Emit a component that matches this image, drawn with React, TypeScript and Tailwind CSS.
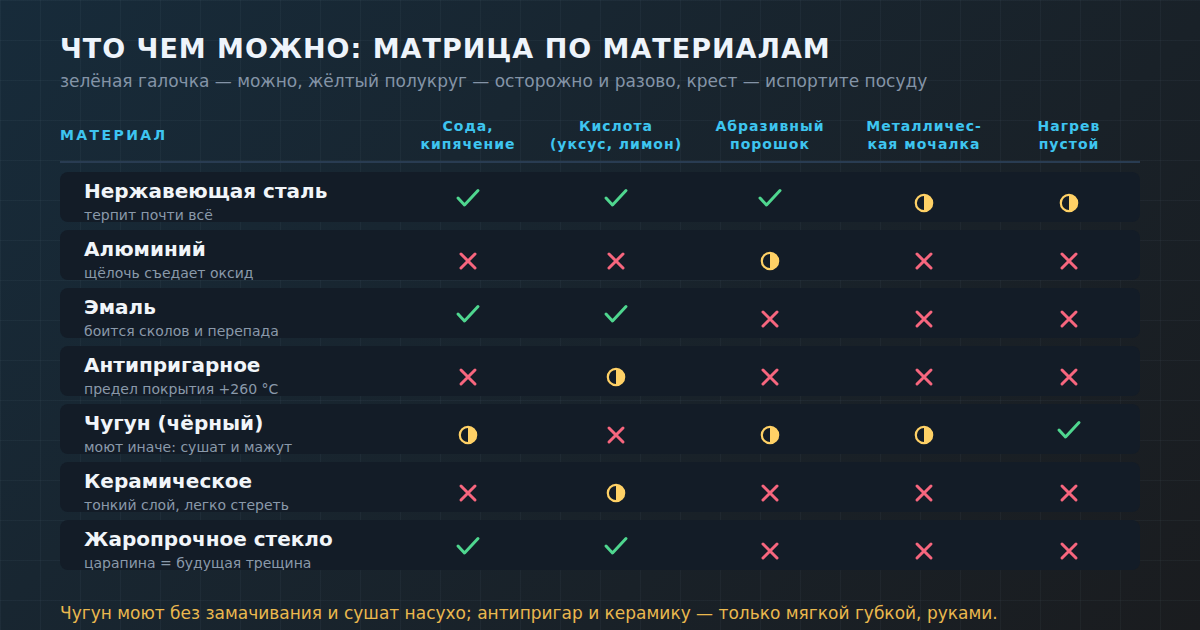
type Mark = "ok" | "warn" | "no";

const rows: { name: string; note: string; marks: Mark[] }[] = [
  { name: "Нержавеющая сталь", note: "терпит почти всё", marks: ["ok", "ok", "ok", "warn", "warn"] },
  { name: "Алюминий", note: "щёлочь съедает оксид", marks: ["no", "no", "warn", "no", "no"] },
  { name: "Эмаль", note: "боится сколов и перепада", marks: ["ok", "ok", "no", "no", "no"] },
  { name: "Антипригарное", note: "предел покрытия +260 °C", marks: ["no", "warn", "no", "no", "no"] },
  { name: "Чугун (чёрный)", note: "моют иначе: сушат и мажут", marks: ["warn", "no", "warn", "warn", "ok"] },
  { name: "Керамическое", note: "тонкий слой, легко стереть", marks: ["no", "warn", "no", "no", "no"] },
  { name: "Жаропрочное стекло", note: "царапина = будущая трещина", marks: ["ok", "ok", "no", "no", "no"] },
];

const heads = [
  ["Сода,", "кипячение"],
  ["Кислота", "(уксус, лимон)"],
  ["Абразивный", "порошок"],
  ["Металличес-", "кая мочалка"],
  ["Нагрев", "пустой"],
];

const cols = "grid grid-cols-[334px_148px_148px_160px_148px_142px]";

const Icon = ({ m }: { m: Mark }) => {
  if (m === "ok")
    return (
      <svg width="26" height="22" viewBox="0 0 26 22" fill="none">
        <polyline points="3,11 9.5,18 23,3.5" stroke="#4fd68f" strokeWidth="3" strokeLinecap="round" strokeLinejoin="round" />
      </svg>
    );
  if (m === "warn")
    return (
      <svg width="20" height="20" viewBox="0 0 20 20" className="mt-[10px]">
        <circle cx="10" cy="10" r="8.2" fill="none" stroke="#ffd166" strokeWidth="2.2" />
        <path d="M10 1.8 A8.2 8.2 0 0 1 10 18.2 Z" fill="#ffd166" />
      </svg>
    );
  return (
    <svg width="20" height="20" viewBox="0 0 20 20" className="mt-[10px]">
      <path d="M3 3 L17 17 M17 3 L3 17" stroke="#f7667e" strokeWidth="3" strokeLinecap="round" />
    </svg>
  );
};

export default function App() {
  return (
    <div className="w-[1200px] h-[630px] overflow-hidden font-['DejaVu_Sans',sans-serif] bg-[linear-gradient(rgba(148,180,200,0.05)_1px,transparent_1px),linear-gradient(90deg,rgba(148,180,200,0.05)_1px,transparent_1px),linear-gradient(135deg,#172b3a,#1a1c1f)] bg-[size:40px_40px,40px_40px,100%_100%] px-[60px] pt-[32px]">
      <h1 className="text-[27px] leading-[34px] font-bold tracking-[1px] text-[#eef4fb]">
        ЧТО ЧЕМ МОЖНО: МАТРИЦА ПО МАТЕРИАЛАМ
      </h1>
      <p className="mt-[3px] text-[17px] leading-[24px] text-[#8494a7]">
        зелёная галочка — можно, жёлтый полукруг — осторожно и разово, крест — испортите посуду
      </p>

      <div className={`${cols} mt-[24px] pb-[8px] border-b-2 border-[#293c52] items-center`}>
        <div className="text-[14px] font-bold tracking-[2.4px] text-[#3ec5f0]">МАТЕРИАЛ</div>
        {heads.map((h) => (
          <div key={h[0]} className="text-center text-[14px] leading-[18px] font-bold tracking-[1px] text-[#3ec5f0]">
            <div>{h[0]}</div>
            <div>{h[1]}</div>
          </div>
        ))}
      </div>

      <div className="mt-[9px] flex flex-col gap-[8px]">
        {rows.map((r) => (
          <div key={r.name} className={`${cols} h-[50px] rounded-lg bg-[#131c27]`}>
            <div className="pl-6 pt-[7px]">
              <div className="text-[20px] leading-[24px] font-bold text-[#f1f5f9]">{r.name}</div>
              <div className="text-[14px] leading-[18px] mt-[3px] text-[#8a99aa]">{r.note}</div>
            </div>
            {r.marks.map((m, i) => (
              <div key={i} className="flex items-center justify-center">
                <Icon m={m} />
              </div>
            ))}
          </div>
        ))}
      </div>

      <p className="mt-[32px] text-[17px] leading-[22px] text-[#eab84e]">
        Чугун моют без замачивания и сушат насухо; антипригар и керамику — только мягкой губкой, руками.
      </p>
    </div>
  );
}
